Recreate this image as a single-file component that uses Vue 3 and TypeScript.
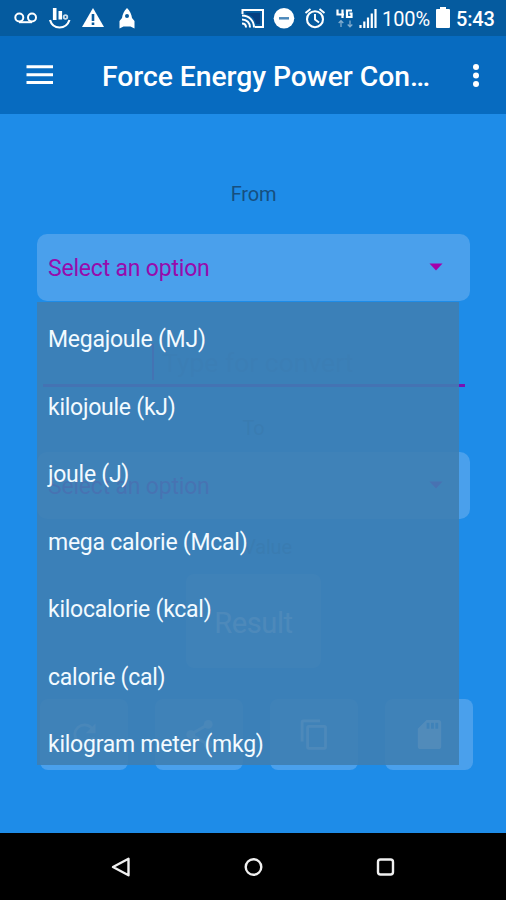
<script setup lang="ts">
import { ref } from 'vue'

const units = ref<string[]>([
  'Megajoule (MJ)',
  'kilojoule (kJ)',
  'joule (J)',
  'mega calorie (Mcal)',
  'kilocalorie (kcal)',
  'calorie (cal)',
  'kilogram meter (mkg)',
])
</script>

<template>
  <div class="screen">
    <header class="status">
      <svg class="status-left" width="140" height="36" viewBox="0 0 140 36" fill="none" stroke="#fff">
        <g stroke-width="2"><circle cx="19.3" cy="17.5" r="4" /><circle cx="32" cy="17.5" r="4" /><path d="M19 22.2h13" /></g>
        <path d="M50 20c3 10 16 10 19.500 0" stroke-width="2.200" />
        <path d="M54.700 8v12M60.300 11v8.500" stroke-width="3.600" />
        <circle cx="65.500" cy="17" r="1.800" stroke-width="1.800" opacity=".8" />
        <path d="M93 8l11 19H82z" fill="#fff" stroke="none" />
        <path d="M93 14v7M93 22.500v2.500" stroke="#075a9e" stroke-width="2.600" />
        <path d="M127 8c3 3 4.500 6 5 10l2.500 3v7.500l-4-2h-7l-4 2V21l2.500-3c.5-4 2-7 5-10z" fill="#fff" stroke="none" />
        <circle cx="127" cy="16" r="2" fill="#075a9e" stroke="none" />
      </svg>
      <svg class="status-mid" width="140" height="36" viewBox="240 0 140 36" fill="none" stroke="#fff">
        <path d="M242.500 14v-4h20.500v17h-8" stroke-width="2" />
        <path d="M246 13h14v11h-4c-1-5-4-9-10-10z" fill="#063f80" stroke="none" />
        <path d="M242 15.500c7 0 12 5 12 12M242 19.500c5 0 8 3.500 8 8M242 23.500q4 0 4 4" stroke-width="2" />
        <circle cx="284" cy="18.300" r="10.300" fill="#fff" stroke="none" />
        <path d="M279 18.300h10" stroke="#4b88ba" stroke-width="2.500" />
        <circle cx="315" cy="19.200" r="8" stroke-width="2.100" />
        <path d="M315 14v5.500l4 3M305.500 13l5-4M324.500 13l-5-4" stroke-width="1.900" />
        <path d="M337.500 9.500v5h6.500M342.500 9.500v8.500M352 10.500h-5v6.500h4.500v-3.500h-2" stroke-width="2.200" />
        <path d="M341 21v6M338.700 23l2.300-2.300 2.300 2.300M350 20.500v6M347.700 24.500l2.300 2.300 2.300-2.300" stroke-width="1.300" opacity=".5" />
        <path d="M360.500 25v3M364.300 21.500v6.500M368 17.500v10.500M371.800 13.500v14.500M375.500 9v19" stroke-width="2.200" />
      </svg>
      <span class="percent">100%</span>
      <svg class="battery" width="14" height="22" viewBox="0 0 14 22"><path d="M4 0h6v2h3q1 0 1 1v17q0 1-1 1H1q-1 0-1-1V3q0-1 1-1h3z" fill="#fff" /></svg>
      <span class="clock">5:43</span>
    </header>

    <nav class="appbar">
      <svg class="burger" width="28" height="20" viewBox="0 0 28 20"><path d="M.5 1.800h26.500M.5 9.700h26.500M.5 17.600h26.500" stroke="#fff" stroke-width="3" /></svg>
      <h1 class="title">Force Energy Power Converter</h1>
      <svg class="more" width="8" height="24" viewBox="0 0 8 24" fill="#fff"><circle cx="4" cy="3" r="3" /><circle cx="4" cy="11.500" r="3" /><circle cx="4" cy="20" r="3" /></svg>
    </nav>

    <main class="content">
      <div class="label from">From</div>
      <div class="select">
        <span>Select an option</span>
        <svg width="14" height="8" viewBox="0 0 14 8"><path d="M.5 .5h13L7 7.500z" fill="#a500aa" /></svg>
      </div>
      <div class="field"><span class="placeholder">Type for convert</span></div>
      <div class="label to">To</div>
      <div class="select">
        <span>Select an option</span>
        <svg width="14" height="8" viewBox="0 0 14 8"><path d="M.5 .5h13L7 7.500z" fill="#a500aa" /></svg>
      </div>
      <div class="label value">Value</div>
      <div class="result">Result</div>
      <div class="actions">
        <div class="action">
          <svg width="33" height="33" viewBox="0 0 24 24" fill="#a9d2f6"><path d="M17.650 6.350A7.950 7.950 0 0 0 12 4a8 8 0 1 0 7.730 10h-2.080A6 6 0 1 1 12 6c1.660 0 3.140.69 4.220 1.780L13 11h7V4z" /></svg>
        </div>
        <div class="action">
          <svg width="35" height="35" viewBox="0 0 24 24" fill="#a9d2f6"><circle cx="18" cy="5" r="3" /><circle cx="6" cy="12" r="3" /><circle cx="18" cy="19" r="3" /><path d="M18 5L6 12l12 7" fill="none" stroke="#a9d2f6" stroke-width="2" /></svg>
        </div>
        <div class="action">
          <svg width="33" height="33" viewBox="0 0 24 24" fill="#d5eaff"><path d="M16 1H4a2 2 0 0 0-2 2v14h2V3h12zm3 4H8a2 2 0 0 0-2 2v14a2 2 0 0 0 2 2h11a2 2 0 0 0 2-2V7a2 2 0 0 0-2-2zm0 16H8V7h11z" /></svg>
        </div>
        <div class="action">
          <svg width="35" height="35" viewBox="0 0 24 24" fill="#fff"><path d="M18 2h-8L4 8v12a2 2 0 0 0 2 2h12a2 2 0 0 0 2-2V4a2 2 0 0 0-2-2zm-6 6h-2V4h2zm3 0h-2V4h2zm3 0h-2V4h2z" /></svg>
        </div>
      </div>

      <ul class="menu">
        <li v-for="unit in units" :key="unit">{{ unit }}</li>
      </ul>
    </main>

    <footer class="navbar">
      <svg width="22" height="22" viewBox="0 0 22 22"><path d="M3 11L18.500 2.800v16.400z" /></svg>
      <svg width="22" height="22" viewBox="0 0 22 22"><circle cx="11.500" cy="11" r="7.800" /></svg>
      <svg width="22" height="22" viewBox="0 0 22 22"><rect x="4" y="3.500" width="15" height="15" rx="2.500" /></svg>
    </footer>
  </div>
</template>

<style>
body {
  margin: 0;
  background: #000;
}
</style>

<style scoped>
.screen {
  display: flex;
  flex-direction: column;
  width: 506px;
  height: 900px;
  overflow: hidden;
  font-family: Roboto, "Liberation Sans", sans-serif;
  background: #1e8ce8;
}
svg {
  display: block;
  flex: none;
}
.status {
  display: flex;
  align-items: center;
  height: 36px;
  flex: none;
  background: #055b9f;
  color: #fff;
}
.status-mid {
  margin-left: 100px;
}
.percent {
  width: 54px;
  margin-left: 2px;
  font-size: 20px;
  letter-spacing: -0.1px;
  white-space: nowrap;
  line-height: 36px;
  padding-top: 2px;
}
.battery {
  margin-left: 0;
}
.clock {
  margin-left: 6px;
  padding-top: 2px;
  font-size: 20px;
  font-weight: 500;
  letter-spacing: -0.2px;
}
.appbar {
  display: flex;
  align-items: center;
  height: 78px;
  flex: none;
  box-sizing: border-box;
  padding: 2px 26px 0;
  background: #076bc0;
}
.burger {
  margin-top: -2px;
}
.title {
  width: 332px;
  margin: 2px 0 0 48px;
  overflow: hidden;
  color: #fff;
  font-size: 28.3px;
  font-weight: 500;
  line-height: 40px;
  letter-spacing: -0.05px;
  white-space: nowrap;
  text-overflow: ellipsis;
}
.more {
  margin-left: auto;
}
.content {
  position: relative;
  flex: none;
  box-sizing: border-box;
  height: 719px;
  padding: 66px 36px 0 37px;
}
.label {
  height: 27px;
  font-size: 20px;
  line-height: 28px;
  letter-spacing: -0.2px;
  text-align: center;
  color: #164f7f;
}
.select {
  display: flex;
  align-items: center;
  justify-content: space-between;
  box-sizing: border-box;
  width: 433px;
  height: 67px;
  padding: 1px 27px 0 11px;
  border-radius: 10px;
  background: #4aa0ec;
  color: #970cad;
  font-size: 23px;
  letter-spacing: -0.2px;
}
.select svg {
  margin-top: -3px;
}
.from {
  margin-bottom: 27px;
}
.field {
  box-sizing: border-box;
  width: 422px;
  height: 51px;
  margin: 35px 0 0 6px;
  padding: 8px 0 0 109px;
  border-bottom: 3px solid #7712b4;
}
.placeholder {
  display: block;
  height: 36px;
  padding-left: 8px;
  border-left: 2px solid #7712b4;
  color: #2079c6;
  font-size: 26.500px;
  line-height: 38px;
}
.to {
  margin: 27px 0 11px;
  color: #1b65a5;
}
.value {
  margin: 14px 0;
  padding-left: 28px;
  color: #1b65a5;
}
.result {
  width: 135px;
  height: 94px;
  margin: 0 auto;
  border-radius: 8px;
  background: #4aa0ec;
  color: #d5eaff;
  font-size: 29px;
  letter-spacing: -0.4px;
  line-height: 98px;
  text-align: center;
}
.actions {
  display: flex;
  gap: 27px;
  margin: 31px 0 0 3px;
}
.action {
  display: flex;
  align-items: center;
  justify-content: center;
  flex: none;
  width: 88px;
  height: 71px;
  border-radius: 8px;
  background: #4aa0ec;
}
.menu {
  position: absolute;
  top: 188px;
  left: 37px;
  box-sizing: border-box;
  width: 422px;
  height: 463px;
  margin: 0;
  padding: 4px 0 0 11px;
  overflow: hidden;
  list-style: none;
  background: rgba(62, 126, 179, 0.9);
  color: #f2faff;
  font-size: 23px;
  letter-spacing: -0.25px;
}
.menu li {
  height: 67.5px;
  line-height: 67.5px;
}
.navbar {
  display: flex;
  align-items: center;
  justify-content: center;
  gap: 110px;
  flex: 1;
  background: #000;
}
.navbar svg {
  fill: none;
  stroke: #f0f0f0;
  stroke-width: 2.4;
  stroke-linejoin: round;
}
</style>
